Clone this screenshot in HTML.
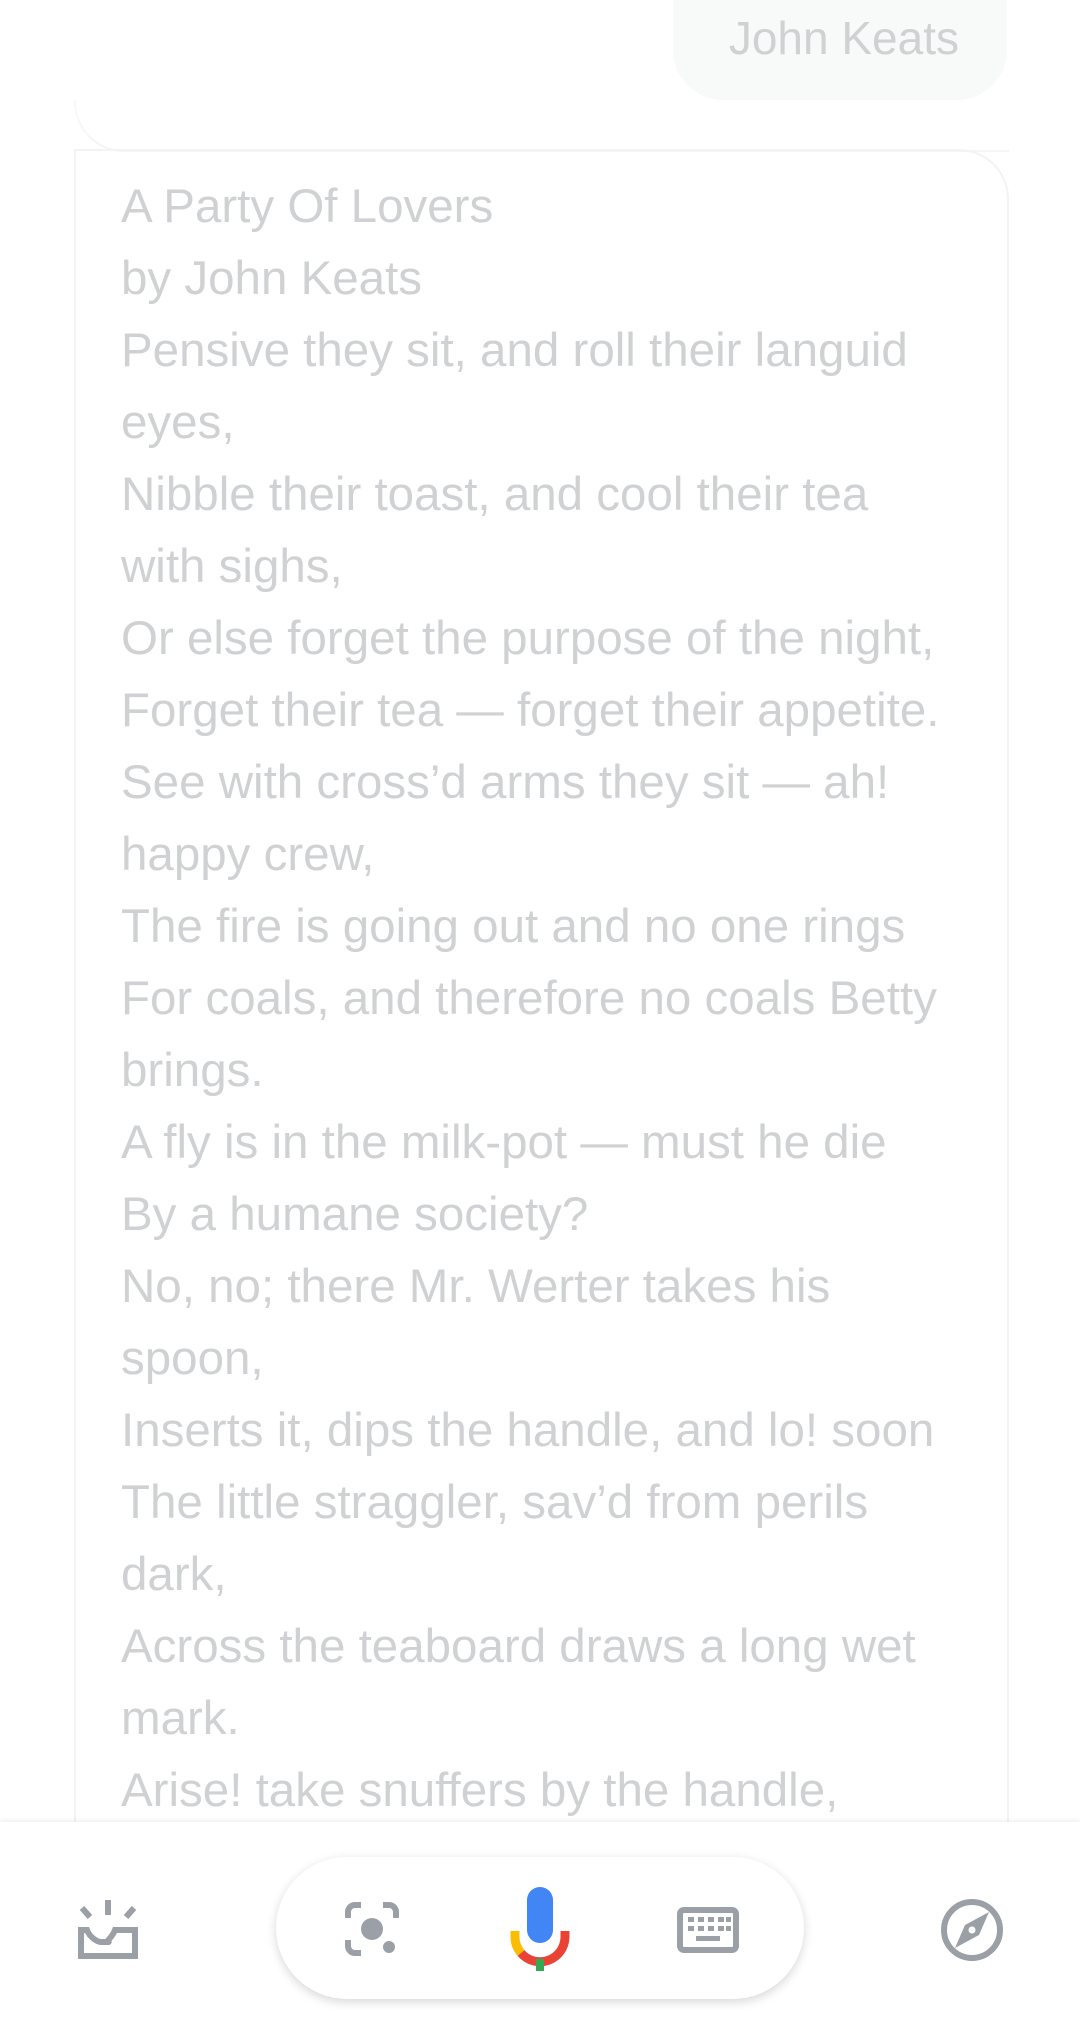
<!DOCTYPE html>
<html><head><meta charset="utf-8"><style>
html,body{margin:0;padding:0;background:#fff;}
body{width:1080px;height:2032px;position:relative;overflow:hidden;font-family:"Liberation Sans",sans-serif;}
.pill{position:absolute;left:673px;top:-60px;width:334px;height:160px;border-radius:50px;background:#f8f9f9;}
.pill span{position:absolute;right:48px;top:60px;line-height:76px;font-size:46px;color:#cfd1d3;}
.prev{position:absolute;left:74px;top:100px;width:933px;height:50px;border-bottom-left-radius:50px;border-left:2px solid #f6f7f8;border-bottom:2px solid #f4f5f6;}
.card{position:absolute;left:74px;top:149px;width:931px;height:1800px;border:2px solid #f1f3f4;border-top-right-radius:50px;}
.txt{position:absolute;left:121px;top:171px;font-size:47.5px;line-height:72px;color:#cfd1d3;white-space:nowrap;}
.bar{position:absolute;left:0;top:1822px;width:1080px;height:210px;background:#fff;box-shadow:0 -2px 4px rgba(0,0,0,0.06);}
.bpill{position:absolute;left:276px;top:1857px;width:528px;height:142px;border-radius:71px;background:#fff;box-shadow:0 3px 10px rgba(0,0,0,0.16);}
svg{position:absolute;}
</style></head><body>
<div class="prev"></div>
<div class="pill"><span>John Keats</span></div>
<div class="card"></div>
<div class="txt">A Party Of Lovers<br>by John Keats<br>Pensive they sit, and roll their languid<br>eyes,<br>Nibble their toast, and cool their tea<br>with sighs,<br>Or else forget the purpose of the night,<br>Forget their tea — forget their appetite.<br>See with cross’d arms they sit — ah!<br>happy crew,<br>The fire is going out and no one rings<br>For coals, and therefore no coals Betty<br>brings.<br>A fly is in the milk-pot — must he die<br>By a humane society?<br>No, no; there Mr. Werter takes his<br>spoon,<br>Inserts it, dips the handle, and lo! soon<br>The little straggler, sav’d from perils<br>dark,<br>Across the teaboard draws a long wet<br>mark.<br>Arise! take snuffers by the handle,</div>
<div class="bar"></div>
<div class="bpill"></div>
<svg width="1080" height="2032" style="left:0;top:0">
 <g fill="none" stroke="#9aa0a6" stroke-width="6">
  <path d="M108 1900v15M82 1908l8 9M134 1908l-8 9"/>
  <path d="M81 1930v26h54v-26h-20c-3 8-10 12-7 12s-4 0-7 0-11-4-14-12z"/>
  <path d="M348 1918v-6a7 7 0 0 1 7-7h6M383 1905h6a7 7 0 0 1 7 7v6M348 1940v6a7 7 0 0 0 7 7h6"/>
  <rect x="680" y="1910" width="56" height="40" rx="4"/>
  <circle cx="972" cy="1930" r="28"/>
 </g>
 <circle cx="372" cy="1929" r="11" fill="#9aa0a6"/>
 <circle cx="389" cy="1947" r="6" fill="#9aa0a6"/>
 <g fill="#9aa0a6">
  <rect x="688" y="1917" width="6" height="5"/><rect x="698" y="1917" width="6" height="5"/><rect x="708" y="1917" width="6" height="5"/><rect x="718" y="1917" width="6" height="5"/><rect x="726" y="1917" width="5" height="5"/>
  <rect x="688" y="1926" width="6" height="5"/><rect x="698" y="1926" width="6" height="5"/><rect x="708" y="1926" width="6" height="5"/><rect x="718" y="1926" width="6" height="5"/><rect x="726" y="1926" width="5" height="5"/>
  <rect x="696" y="1936" width="24" height="5"/>
  <path d="M989 1912L979 1935L955 1948L965 1925Z"/>
 </g>
 <circle cx="972" cy="1930" r="3.5" fill="#fff"/>
 <rect x="527" y="1887" width="26" height="56" rx="13" fill="#4285f4"/>
 <path d="M515 1931v6a25 25 0 0 0 6 16" fill="none" stroke="#fbbc04" stroke-width="9"/>
 <path d="M521 1953a25 25 0 0 0 44-16v-6" fill="none" stroke="#ea4335" stroke-width="9"/>
 <rect x="536" y="1959" width="8" height="12" fill="#34a853"/>
</svg>
</body></html>
